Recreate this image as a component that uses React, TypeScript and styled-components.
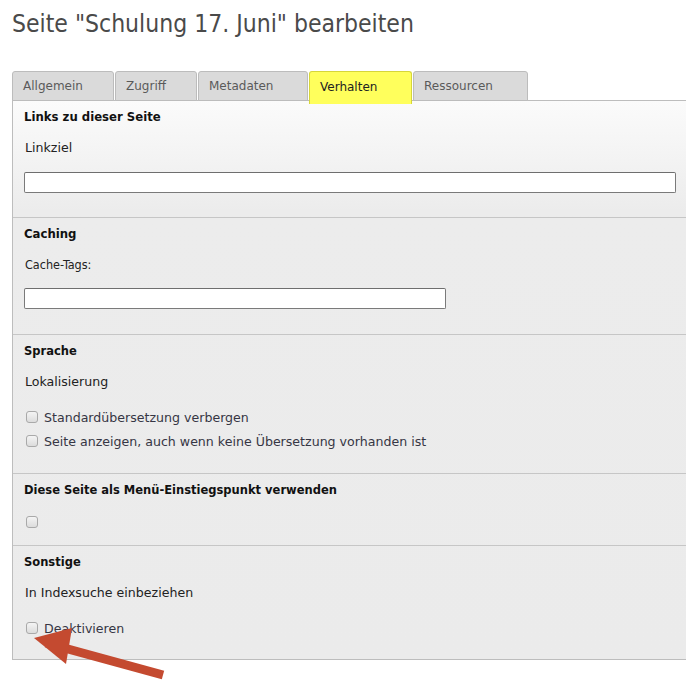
import React from "react";
import styled, { createGlobalStyle } from "styled-components";

const Global = createGlobalStyle`
  html, body { margin: 0; padding: 0; background: #fff; }
  body { font-family: "DejaVu Sans", Verdana, sans-serif; font-size: 12px; color: #222; overflow: hidden; }
`;

const Page = styled.div`
  position: relative;
  padding: 0 0 0 12px;
  width: 686px;
  height: 683px;
  box-sizing: border-box;
`;

const Title = styled.h1`
  margin: 0;
  padding-top: 9px;
  height: 71px;
  box-sizing: border-box;
  font-family: "DejaVu Sans Condensed", "DejaVu Sans", sans-serif;
  font-weight: normal;
  font-size: 24.5px;
  line-height: 30px;
  color: #4a4a4a;
`;

const TabBar = styled.div`
  display: flex;
  gap: 1px;
  height: 29px;
  position: relative;
  z-index: 1;
`;

const Tab = styled.div<{ $active?: boolean; $w: number }>`
  width: ${(p) => p.$w}px;
  box-sizing: border-box;
  height: ${(p) => (p.$active ? 33 : 30)}px;
  padding: 0 0 0 10px;
  display: flex;
  align-items: center;
  padding-bottom: ${(p) => (p.$active ? 3 : 0)}px;
  border: 1px solid ${(p) => (p.$active ? "#d6d63a" : "#bcbcbc")};
  border-bottom: ${(p) => (p.$active ? "none" : "1px solid #bcbcbc")};
  border-radius: 3px 3px 0 0;
  background: ${(p) => (p.$active ? "#ffff5c" : "#dadada")};
  color: ${(p) => (p.$active ? "#222" : "#5a5a5a")};
  font-size: 12px;
`;

const Panel = styled.div`
  width: 676px;
  box-sizing: border-box;
  border: 1px solid #bdbdbd;
  background: linear-gradient(#fbfbfb 0px, #ececec 110px, #ebebeb 100%);
`;

const Section = styled.section<{ $pb: number }>`
  padding: 8px 11px ${(p) => p.$pb}px 11px;
  border-top: 1px solid #c6c6c6;
  &:first-child { border-top: none; }
`;

const Heading = styled.div<{ $narrow?: boolean }>`
  font-family: ${(p) =>
    p.$narrow ? '"DejaVu Sans Condensed", "DejaVu Sans", sans-serif' : '"DejaVu Sans", sans-serif'};
  font-weight: bold;
  font-size: ${(p) => (p.$narrow ? 13 : 11.5)}px;
  line-height: 16px;
  color: #111;
`;

const Label = styled.div<{ $mt: number; $narrow?: boolean }>`
  margin-top: ${(p) => p.$mt}px;
  padding-left: 1px;
  font-family: ${(p) =>
    p.$narrow ? '"DejaVu Sans Condensed", "DejaVu Sans", sans-serif' : '"DejaVu Sans", sans-serif'};
  font-size: ${(p) => (p.$narrow ? 12.5 : 12.6)}px;
  line-height: 16px;
  color: #222;
`;

const TextInput = styled.div<{ $w: number; $mt: number }>`
  margin-top: ${(p) => p.$mt}px;
  width: ${(p) => p.$w}px;
  height: 21px;
  box-sizing: border-box;
  background: #fff;
  border: 1px solid #7a7a7a;
  border-top-color: #6e6e6e;
  border-radius: 2px;
`;

const CheckRow = styled.label<{ $mt: number }>`
  margin-top: ${(p) => p.$mt}px;
  display: flex;
  align-items: center;
  gap: 6px;
  padding-left: 2px;
  height: 16px;
  font-size: 12.6px;
  color: #363644;
`;

const Box = styled.span`
  width: 12px;
  height: 12px;
  box-sizing: border-box;
  border: 1px solid #a9a9a9;
  border-radius: 3px;
  background: linear-gradient(#f4f4f4, #dcdcdc);
  flex: none;
`;

const Arrow = styled.svg`
  position: absolute;
  left: 0;
  top: 600px;
  pointer-events: none;
`;

const tabs = [
  { t: "Allgemein", w: 102 },
  { t: "Zugriff", w: 82 },
  { t: "Metadaten", w: 110 },
  { t: "Verhalten", w: 103, a: true },
  { t: "Ressourcen", w: 115 },
];

export default function App() {
  return (
    <Page>
      <Global />
      <Title>Seite "Schulung 17. Juni" bearbeiten</Title>
      <TabBar>
        {tabs.map((x) => (
          <Tab key={x.t} $w={x.w} $active={x.a}>
            {x.t}
          </Tab>
        ))}
      </TabBar>
      <Panel>
        <Section $pb={24}>
          <Heading $narrow>Links zu dieser Seite</Heading>
          <Label $mt={15}>Linkziel</Label>
          <TextInput $w={652} $mt={16} />
        </Section>
        <Section $pb={25}>
          <Heading $narrow>Caching</Heading>
          <Label $mt={15} $narrow>Cache-Tags:</Label>
          <TextInput $w={422} $mt={15} />
        </Section>
        <Section $pb={24}>
          <Heading>Sprache</Heading>
          <Label $mt={15}>Lokalisierung</Label>
          <CheckRow $mt={19}>
            <Box />
            Standardübersetzung verbergen
          </CheckRow>
          <CheckRow $mt={8}>
            <Box />
            Seite anzeigen, auch wenn keine Übersetzung vorhanden ist
          </CheckRow>
        </Section>
        <Section $pb={15}>
          <Heading>Diese Seite als Menü-Einstiegspunkt verwenden</Heading>
          <CheckRow $mt={16}>
            <Box />
          </CheckRow>
        </Section>
        <Section $pb={23}>
          <Heading>Sonstige</Heading>
          <Label $mt={15}>In Indexsuche einbeziehen</Label>
          <CheckRow $mt={19}>
            <Box />
            Deaktivieren
          </CheckRow>
        </Section>
      </Panel>
      <Arrow width="180" height="83" viewBox="0 600 180 83">
        <line x1="163" y1="675" x2="46" y2="643" stroke="#c44a30" strokeWidth="9" />
        <polygon points="34,638 72,628 66,664" fill="#c44a30" />
      </Arrow>
    </Page>
  );
}
